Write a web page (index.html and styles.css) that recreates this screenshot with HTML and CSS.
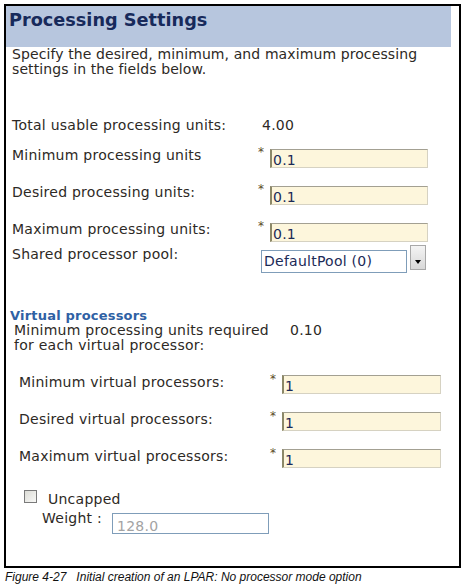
FILE: index.html
```html
<!DOCTYPE html>
<html lang="en">
<head>
<meta charset="utf-8">
<title>Processing Settings</title>
<link rel="stylesheet" href="styles.css">
</head>
<body>
<div class="frame">
  <div class="header"><h1 class="title">Processing Settings</h1></div>
  <p class="intro">Specify the desired, minimum, and maximum processing<br>settings in the fields below.</p>

  <div class="form">
    <div class="row row-total">
      <span class="label">Total usable processing units:</span>
      <span class="value total-value">4.00</span>
    </div>
    <div class="row">
      <span class="label">Minimum processing units</span>
      <span class="req">*</span>
      <input class="field" type="text" value="0.1">
    </div>
    <div class="row">
      <span class="label">Desired processing units:</span>
      <span class="req">*</span>
      <input class="field" type="text" value="0.1">
    </div>
    <div class="row row-last">
      <span class="label">Maximum processing units:</span>
      <span class="req">*</span>
      <input class="field" type="text" value="0.1">
    </div>
    <div class="row row-select">
      <span class="label">Shared processor pool:</span>
      <span class="select">DefaultPool (0)</span>
      <span class="drop"><span class="tri"></span></span>
    </div>
  </div>

  <div class="vp">
    <h2 class="vp-title">Virtual processors</h2>
    <div class="vp-info">
      <span class="vp-info-label">Minimum processing units required<br>for each virtual processor:</span>
      <span class="value">0.10</span>
    </div>
    <div class="vrow">
      <span class="vlabel">Minimum virtual processors:</span>
      <span class="req">*</span>
      <input class="field vfield" type="text" value="1">
    </div>
    <div class="vrow">
      <span class="vlabel">Desired virtual processors:</span>
      <span class="req">*</span>
      <input class="field vfield" type="text" value="1">
    </div>
    <div class="vrow">
      <span class="vlabel">Maximum virtual processors:</span>
      <span class="req">*</span>
      <input class="field vfield" type="text" value="1">
    </div>
  </div>

  <div class="uncapped">
    <input class="check" type="checkbox">
    <span class="check-label">Uncapped</span>
  </div>
  <div class="weight">
    <span class="weight-label">Weight :</span>
    <input class="weight-field" type="text" value="128.0">
  </div>
</div>
<p class="caption">Figure 4-27&nbsp;&nbsp;&nbsp;Initial creation of an LPAR: No processor mode option</p>
</body>
</html>
```
FILE: styles.css
```css
html, body {
  margin: 0;
  padding: 0;
  background: #ffffff;
}
body {
  font-family: "DejaVu Sans", Verdana, sans-serif;
  font-size: 14px;
  letter-spacing: 0.25px;
  color: #2d2925;
}
.frame {
  margin: 4px 0 0 4px;
  width: 453px;
  height: 560px;
  border: 2px solid #000000;
  box-sizing: content-box;
}
.header {
  margin-right: 8px;
  height: 41px;
  background: #b7c6de;
  box-sizing: border-box;
  padding: 3px 0 0 3px;
}
.title {
  margin: 0;
  font-size: 17.7px;
  line-height: 22px;
  letter-spacing: 0;
  font-weight: bold;
  color: #172a5b;
}
.intro {
  margin: 0;
  padding-left: 6px;
  line-height: 15px;
  letter-spacing: 0.1px;
}
.form {
  margin-top: 40px;
  display: flex;
  flex-direction: column;
}
.row {
  display: flex;
  align-items: flex-start;
  height: 25px;
  margin-bottom: 12px;
  padding-left: 6px;
}
.row-total {
  height: 30px;
  margin-bottom: 0;
}
.row-last {
  margin-bottom: 0;
}
.row-select {
  margin-bottom: 0;
}
.label {
  width: 246px;
  line-height: 16px;
  flex: none;
}
.value {
  line-height: 16px;
}
.total-value {
  padding-left: 4px;
}
.req {
  width: 12px;
  flex: none;
  font-size: 12px;
  line-height: 10px;
  color: #5b4a1e;
}
.field {
  margin: 2px 0 0 0;
  width: 158px;
  height: 19px;
  box-sizing: border-box;
  background: #fdf6dc;
  border: 1px solid #d6d2c2;
  border-left: 2px solid #8c8868;
  border-top-color: #a3a092;
  font-family: "DejaVu Sans", Verdana, sans-serif;
  font-size: 14px;
  letter-spacing: 0.25px;
  color: #1b2a57;
  padding: 2px 0 0 1px;
  outline: none;
}
.select {
  margin: 4px 0 0 3px;
  width: 146px;
  height: 23px;
  box-sizing: border-box;
  border: 1px solid #7f9db9;
  padding-left: 2px;
  line-height: 21px;
  color: #1b2a57;
  flex: none;
}
.drop {
  margin: -1px 0 0 3px;
  width: 16px;
  height: 25px;
  box-sizing: border-box;
  border: 1px solid #a8a8a8;
  background: linear-gradient(#f4f4f4, #d8d8d8);
  display: flex;
  justify-content: center;
  padding-top: 14px;
  flex: none;
}
.tri {
  width: 0;
  height: 0;
  border-left: 3px solid transparent;
  border-right: 3px solid transparent;
  border-top: 4px solid #000000;
}
.vp {
  margin-top: 38px;
}
.vp-title {
  margin: 0;
  padding-left: 4px;
  font-size: 13px;
  line-height: 14px;
  letter-spacing: 0.2px;
  font-weight: bold;
  color: #2f61a4;
}
.vp-info {
  display: flex;
  padding-left: 8px;
  line-height: 15px;
}
.vp-info-label {
  width: 276px;
  flex: none;
}
.vp-info .value {
  line-height: 15px;
}
.vrow {
  display: flex;
  align-items: flex-start;
  height: 25px;
  padding-left: 13px;
  margin-top: 12px;
}
.vp-info + .vrow {
  margin-top: 21px;
}
.vlabel {
  width: 251px;
  flex: none;
  line-height: 16px;
}
.vfield {
  margin-top: 1px;
  width: 159px;
}
.uncapped {
  display: flex;
  align-items: flex-start;
  margin-top: 17px;
  padding-left: 18px;
}
.check {
  appearance: none;
  -webkit-appearance: none;
  margin: 0;
  width: 13px;
  height: 13px;
  box-sizing: border-box;
  border: 1px solid #7a7a7a;
  background: linear-gradient(135deg, #dcdcd6, #f8f8f6);
  flex: none;
}
.check-label {
  margin: 1px 0 0 11px;
  line-height: 16px;
}
.weight {
  display: flex;
  align-items: flex-start;
  margin-top: 3px;
  padding-left: 36px;
}
.weight-label {
  width: 70px;
  flex: none;
  line-height: 16px;
}
.weight-field {
  margin: 3px 0 0 0;
  width: 157px;
  height: 21px;
  box-sizing: border-box;
  border: 1px solid #7f9db9;
  background: #ffffff;
  padding: 5px 0 0 4px;
  font-family: "DejaVu Sans", Verdana, sans-serif;
  font-size: 14px;
  letter-spacing: 0.25px;
  color: #a3a3a3;
  outline: none;
}
.caption {
  margin: 2px 0 0 0;
  padding-left: 5px;
  font-family: "Liberation Sans", Arial, sans-serif;
  font-style: italic;
  font-size: 12px;
  line-height: 14px;
  letter-spacing: 0;
  color: #111111;
}
```
